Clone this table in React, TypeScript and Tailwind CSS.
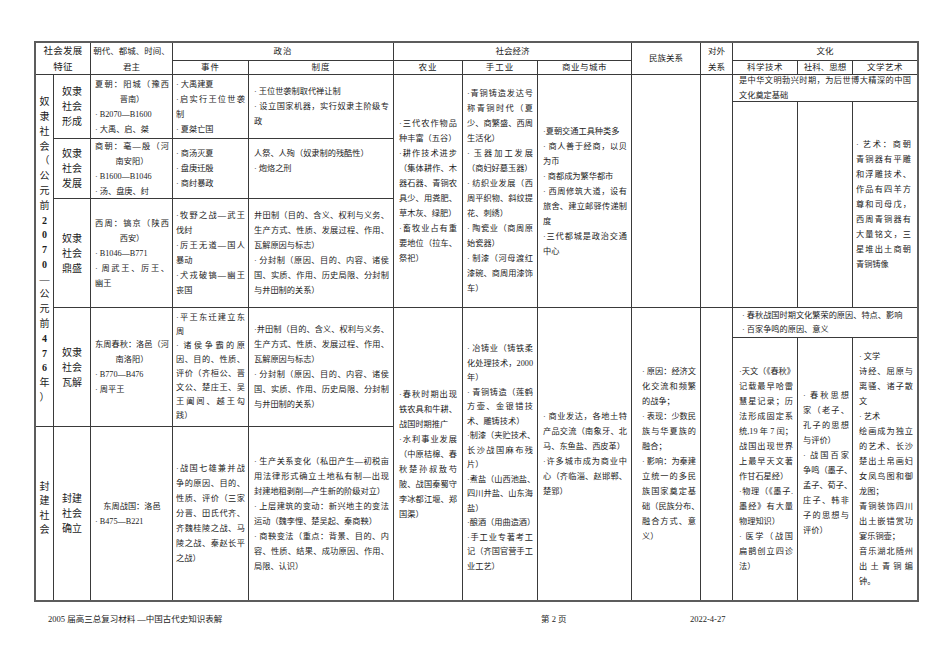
import React from "react";

type Para = string[];

type Stage = {
  pos: string[];
  name: string[];
  dynasty: Para[];
  events: Para[];
  eventsLh?: string;
  system: Para[];
};

const stages: Stage[] = [
  {
    pos: [
      "col-start-2 row-start-3 row-span-2",
      "col-start-3 row-start-3 row-span-2",
      "col-start-4 row-start-3 row-span-2",
      "col-start-5 row-start-3 row-span-2",
    ],
    name: ["奴隶", "社会", "形成"],
    dynasty: [["夏朝：阳城（豫西", "晋南）"], ["· B2070—B1600"], ["· 大禹、启、桀"]],
    events: [["· 大禹建夏"], ["·启实行王位世袭", "制"], ["· 夏桀亡国"]],
    system: [["· 王位世袭制取代禅让制"], ["· 设立国家机器，实行奴隶主阶级专", "政"]],
  },
  {
    pos: ["col-start-2 row-start-5", "col-start-3 row-start-5", "col-start-4 row-start-5", "col-start-5 row-start-5"],
    name: ["奴隶", "社会", "发展"],
    dynasty: [["商朝：亳—殷（河", "南安阳）"], ["· B1600—B1046"], ["· 汤、盘庚、纣"]],
    events: [["· 商汤灭夏"], ["· 盘庚迁殷"], ["· 商纣暴政"]],
    system: [["人祭、人殉（奴隶制的残酷性）"], ["· 炮烙之刑"], [""]],
  },
  {
    pos: ["col-start-2 row-start-6", "col-start-3 row-start-6", "col-start-4 row-start-6", "col-start-5 row-start-6"],
    name: ["奴隶", "社会", "鼎盛"],
    dynasty: [["西周：镐京（陕西", "西安）"], ["· B1046—B771"], ["· 周武王、厉王、", "幽王"]],
    events: [["·牧野之战—武王", "伐纣"], ["·厉王无道—国人", "暴动"], ["·犬戎破镐—幽王", "丧国"]],
    system: [
      ["井田制（目的、含义、权利与义务、", "生产方式、性质、发展过程、作用、", "瓦解原因与标志）"],
      ["· 分封制（原因、目的、内容、诸侯", "国、实质、作用、历史局限、分封制", "与井田制的关系）"],
    ],
  },
  {
    pos: [
      "col-start-2 row-start-7 row-span-2",
      "col-start-3 row-start-7 row-span-2",
      "col-start-4 row-start-7 row-span-2",
      "col-start-5 row-start-7 row-span-2",
    ],
    name: ["奴隶", "社会", "瓦解"],
    dynasty: [["东周春秋：洛邑（河", "南洛阳）"], ["· B770—B476"], ["· 周平王"]],
    events: [
      ["·平王东迁建立东", "周"],
      ["· 诸侯争霸的原", "因、目的、性质、", "评价（齐桓公、晋", "文公、楚庄王、吴", "王阖闾、越王勾", "践）"],
    ],
    eventsLh: "leading-[14px]",
    system: [
      ["·井田制（目的、含义、权利与义务、", "生产方式、性质、发展过程、作用、", "瓦解原因与标志）"],
      ["· 分封制（原因、目的、内容、诸侯", "国、实质、作用、历史局限、分封制", "与井田制的关系）"],
    ],
  },
  {
    pos: ["col-start-2 row-start-9", "col-start-3 row-start-9", "col-start-4 row-start-9", "col-start-5 row-start-9"],
    name: ["封建", "社会", "确立"],
    dynasty: [["东周战国：洛邑"], ["· B475—B221"]],
    events: [
      ["·战国七雄兼并战", "争的原因、目的、", "性质、评价（三家", "分晋、田氏代齐、", "齐魏桂陵之战、马", "陵之战、秦赵长平", "之战）"],
    ],
    system: [
      ["· 生产关系变化（私田产生—初税亩", "用法律形式确立土地私有制—出现", "封建地租剥削—产生新的阶级对立）"],
      ["· 上层建筑的变动：新兴地主的变法", "运动（魏李悝、楚吴起、秦商鞅）"],
      ["· 商鞅变法（重点：背景、目的、内", "容、性质、结果、成功原因、作用、", "局限、认识）"],
    ],
  },
];

function Lines({ paras, centerFirst }: { paras: Para[]; centerFirst?: boolean }) {
  return (
    <>
      {paras.map((p, pi) => (
        <div key={pi} className={centerFirst && pi === 0 ? "text-center" : "text-left"}>
          {p.map((l, li) => (
            <div
              key={li}
              className={li < p.length - 1 ? "whitespace-nowrap [text-align-last:justify]" : "whitespace-nowrap"}
            >
              {l || "\u00a0"}
            </div>
          ))}
        </div>
      ))}
    </>
  );
}

function Cell({
  pos,
  pad,
  paras,
  centerFirst,
  lh,
}: {
  pos: string;
  pad: string;
  paras: Para[];
  centerFirst?: boolean;
  lh?: string;
}) {
  return (
    <div className={`${pos} ${pad} ${lh ?? "leading-[15px]"} flex flex-col justify-center overflow-visible bg-white text-[8.2px]`}>
      <Lines paras={paras} centerFirst={centerFirst} />
    </div>
  );
}

function Head({ pos, children, cls }: { pos: string; children: React.ReactNode; cls?: string }) {
  return (
    <div className={`${pos} flex flex-col items-center justify-center bg-white text-center text-[8.5px] ${cls ?? "leading-[13px]"}`}>
      {children}
    </div>
  );
}

const slaveText = "奴隶社会（公元前2070—公元前476年）".split("");

export default function App() {
  return (
    <div className="h-[671px] w-[950px] bg-white pl-[34px] pt-[41px] font-['Liberation_Serif','Noto_Sans_CJK_SC',serif] text-[#1c1c1c]">
      <div className="grid w-fit grid-cols-[17px_36px_81px_75px_144px_68px_74px_93px_68px_31px_64px_54px_64px] grid-rows-[17px_13px_26px_36px_59px_108px_29px_88px_173px] gap-px border-2 border-[#5c5c5c] bg-[#3a3a3a]">
        {/* header */}
        <Head pos="col-start-1 col-span-2 row-start-1 row-span-2" cls="leading-[16px] text-[9.5px] tracking-[0.3px]">
          <div>社会发展</div>
          <div>特征</div>
        </Head>
        <Head pos="col-start-3 row-start-1 row-span-2" cls="leading-[16px]">
          <div>朝代、都城、时间、</div>
          <div>君主</div>
        </Head>
        <Head pos="col-start-4 col-span-2 row-start-1" cls="leading-[13px] tracking-[1px]">政治</Head>
        <Head pos="col-start-4 row-start-2" cls="leading-[13px] tracking-[1px]">事件</Head>
        <Head pos="col-start-5 row-start-2" cls="leading-[13px] tracking-[1px]">制度</Head>
        <Head pos="col-start-6 col-span-3 row-start-1">社会经济</Head>
        <Head pos="col-start-6 row-start-2" cls="leading-[13px] tracking-[1px]">农业</Head>
        <Head pos="col-start-7 row-start-2" cls="leading-[13px] tracking-[1px]">手工业</Head>
        <Head pos="col-start-8 row-start-2" cls="leading-[13px] tracking-[0.5px]">商业与城市</Head>
        <Head pos="col-start-9 row-start-1 row-span-2">民族关系</Head>
        <Head pos="col-start-10 row-start-1 row-span-2" cls="leading-[16px]">
          <div>对外</div>
          <div>关系</div>
        </Head>
        <Head pos="col-start-11 col-span-3 row-start-1">文化</Head>
        <Head pos="col-start-11 row-start-2" cls="leading-[13px] tracking-[0.5px]">科学技术</Head>
        <Head pos="col-start-12 row-start-2">社科、思想</Head>
        <Head pos="col-start-13 row-start-2" cls="leading-[13px] tracking-[0.5px]">文学艺术</Head>

        {/* era column */}
        <div className="col-start-1 row-start-3 row-span-6 flex flex-col items-center justify-center bg-white text-[10px] leading-[14.8px]">
          {slaveText.map((c, i) => (
            <div key={i} className={/[0-9]/.test(c) ? "font-bold" : ""}>
              {c}
            </div>
          ))}
        </div>
        <div className="col-start-1 row-start-9 flex flex-col items-center justify-center bg-white pb-[10px] text-[10px] leading-[14.5px]">
          <div>封</div>
          <div>建</div>
          <div>社</div>
          <div>会</div>
        </div>

        {/* political rows */}
        {stages.map((s, i) => (
          <React.Fragment key={i}>
            <div className={`${s.pos[0]} flex flex-col items-center justify-center bg-white text-[10px] leading-[15px]`}>
              {s.name.map((n) => (
                <div key={n}>{n}</div>
              ))}
            </div>
            <Cell pos={s.pos[1]} pad="pl-[4px] pr-[3px]" paras={s.dynasty} centerFirst />
            <Cell pos={s.pos[2]} pad="pl-[3px] pr-[3px]" paras={s.events} lh={s.eventsLh} />
            <Cell pos={s.pos[3]} pad="pl-[5px] pr-[4px]" paras={s.system} />
          </React.Fragment>
        ))}

        {/* economy */}
        <Cell
          pos="col-start-6 row-start-3 row-span-4"
          pad="pl-[5px] pr-[5px]"
          paras={[
            ["·三代农作物品", "种丰富（五谷）"],
            ["·耕作技术进步", "（集体耕作、木", "器石器、青铜农", "具少、用粪肥、", "草木灰、绿肥）"],
            ["·畜牧业占有重", "要地位（拉车、", "祭祀）"],
          ]}
        />
        <Cell
          pos="col-start-6 row-start-7 row-span-3"
          pad="pl-[5px] pr-[5px]"
          paras={[
            ["·春秋时期出现", "铁农具和牛耕、", "战国时期推广"],
            ["·水利事业发展", "（中原桔槔、春", "秋楚孙叔敖芍", "陂、战国秦蜀守", "李冰都江堰、郑", "国渠）"],
          ]}
        />
        <Cell
          pos="col-start-7 row-start-3 row-span-4"
          pad="pl-[4px] pr-[4px]"
          paras={[
            ["·青铜铸造发达号", "称青铜时代（夏", "少、商繁盛、西周", "生活化）"],
            ["· 玉器加工发展", "（商妇好墓玉器）"],
            ["· 纺织业发展（西", "周平织物、斜纹提", "花、刺绣）"],
            ["· 陶瓷业（商周原", "始瓷器）"],
            ["· 制漆（河母渡红", "漆碗、商周用漆饰", "车）"],
          ]}
        />
        <Cell
          pos="col-start-7 row-start-7 row-span-3"
          pad="pl-[4px] pr-[4px]"
          lh="leading-[14.5px] pt-[8px]"
          paras={[
            ["· 冶铸业（铸铁柔", "化处理技术，2000", "年）"],
            ["· 青铜铸造（莲鹤", "方壶、金银错技", "术、雕铸技术）"],
            ["·制漆（夹贮技术、", "长沙战国麻布残", "片）"],
            ["·煮盐（山西池盐、", "四川井盐、山东海", "盐）"],
            ["·酿酒（用曲造酒）"],
            ["·手工业专著考工", "记（齐国官营手工", "业工艺）"],
          ]}
        />
        <Cell
          pos="col-start-8 row-start-3 row-span-4"
          pad="pl-[5px] pr-[4px]"
          paras={[
            ["·夏朝交通工具种类多"],
            ["· 商人善于经商，以贝", "为币"],
            ["· 商都成为繁华都市"],
            ["· 西周修筑大道，设有", "旅舍、建立邮驿传递制", "度"],
            ["·三代都城是政治交通", "中心"],
          ]}
        />
        <Cell
          pos="col-start-8 row-start-7 row-span-3"
          pad="pl-[5px] pr-[4px]"
          paras={[
            ["· 商业发达，各地土特", "产品交流（南象牙、北", "马、东鱼盐、西皮革）"],
            ["·许多城市成为商业中", "心（齐临淄、赵邯郸、", "楚郢）"],
          ]}
        />
        <div className="col-start-9 row-start-3 row-span-4 bg-white" />
        <Cell
          pos="col-start-9 row-start-7 row-span-3"
          pad="pl-[10px] pr-[4px]"
          paras={[
            ["· 原因：经济文", "化交流和频繁", "的战争；"],
            ["· 表现：少数民", "族与华夏族的", "融合；"],
            ["· 影响：为秦建", "立统一的多民", "族国家奠定基", "础（民族分布、", "融合方式、意", "义）"],
          ]}
        />
        <div className="col-start-10 row-start-3 row-span-4 bg-white" />
        <div className="col-start-10 row-start-7 row-span-3 bg-white" />

        {/* culture */}
        <Cell
          pos="col-start-11 col-span-3 row-start-3"
          pad="pl-[6px] pr-[6px]"
          paras={[["是中华文明勃兴时期，为后世博大精深的中国", "文化奠定基础"]]}
        />
        <div className="col-start-11 row-start-4 row-span-3 bg-white" />
        <div className="col-start-12 row-start-4 row-span-3 bg-white" />
        <Cell
          pos="col-start-13 row-start-4 row-span-3"
          pad="pl-[3px] pr-[6px]"
          paras={[
            ["· 艺术：商朝", "青铜器有平雕", "和浮雕技术、", "作品有四羊方", "尊和司母戊，", "西周青铜器有", "大量铭文，三", "星堆出土商朝", "青铜铸像"],
          ]}
        />
        <Cell
          pos="col-start-11 col-span-3 row-start-7"
          pad="pl-[9px] pr-[6px]"
          lh="leading-[14px]"
          paras={[["· 春秋战国时期文化繁荣的原因、特点、影响"], ["· 百家争鸣的原因、意义"]]}
        />
        <Cell
          pos="col-start-11 row-start-8 row-span-2"
          pad="pl-[6px] pr-[4px]"
          paras={[
            ["·天文（《春秋》", "记载最早哈雷", "慧星记录；历", "法形成固定系", "统,19 年 7 闰；", "战国出现世界", "上最早天文著", "作甘石星经）"],
            ["·物理（《墨子.", "墨经》有大量", "物理知识）"],
            ["· 医学（战国", "扁鹊创立四诊", "法）"],
          ]}
        />
        <Cell
          pos="col-start-12 row-start-8 row-span-2"
          pad="pl-[5px] pr-[3px]"
          lh="leading-[15px] pb-[12px]"
          paras={[
            ["· 春秋思想", "家（老子、", "孔子的思想", "与评价）"],
            ["· 战国百家", "争鸣（墨子、", "孟子、荀子、", "庄子、韩非", "子的思想与", "评价）"],
          ]}
        />
        <Cell
          pos="col-start-13 row-start-8 row-span-2"
          pad="pl-[6px] pr-[4px]"
          paras={[
            ["· 文学"],
            ["诗经、屈原与", "离骚、诸子散", "文"],
            ["· 艺术"],
            ["绘画成为独立", "的艺术、长沙", "楚出土帛画妇", "女凤鸟图和御", "龙图；"],
            ["青铜装饰四川", "出土嵌错赏功", "宴乐铜壶；"],
            ["音乐湖北随州", "出土青铜编", "钟。"],
          ]}
        />
      </div>

      <div className="mt-[10px] grid grid-cols-[493px_149px_1fr] pl-[14px] text-[8.5px] leading-[15px]">
        <div>2005 届高三总复习材料 —中国古代史知识表解</div>
        <div>第 2 页</div>
        <div>2022-4-27</div>
      </div>
    </div>
  );
}
